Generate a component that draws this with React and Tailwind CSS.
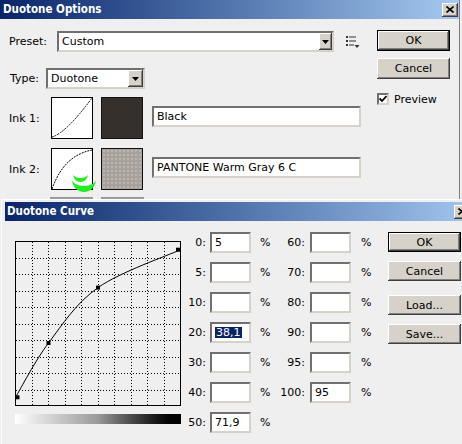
import React from 'react';

const sunken =
  'bg-white border-2 border-t-[#707070] border-l-[#707070] border-b-[#d6d2ca] border-r-[#d6d2ca]';
const raised =
  'bg-[#d6d2ca] shadow-[inset_-1px_-1px_0_#404040,inset_1px_1px_0_#ffffff,inset_-2px_-2px_0_#808080]';
const titleFont = "font-['DejaVu_Sans_Condensed','Liberation_Sans',sans-serif] font-bold text-[11.5px] text-white";

const DownArrow = () => (
  <svg width="7" height="4" viewBox="0 0 7 4">
    <path d="M0 0h7L3.5 4z" fill="#000" />
  </svg>
);

const CloseBtn = ({ className = '' }) => (
  <div className={`${raised} w-[16px] h-[14px] flex items-center justify-center ${className}`}>
    <svg width="8" height="7" viewBox="0 0 8 7">
      <path d="M0.5 0.5L7.5 6.5M7.5 0.5L0.5 6.5" stroke="#000" strokeWidth="1.6" />
    </svg>
  </div>
);

const Select = ({ value, className, btn }) => (
  <div className={`${sunken} h-[21px] flex items-stretch ${className}`}>
    <span className="flex-1 flex items-center pl-[3px]">{value}</span>
    <div className={`${raised} ${btn} flex items-center justify-center`}>
      <DownArrow />
    </div>
  </div>
);

const Button = ({ children, className = '' }) => (
  <div className={`${raised} w-[73px] flex items-center justify-center ${className}`}>{children}</div>
);

const MenuIcon = ({ className = '' }) => (
  <svg className={className} width="14" height="12" viewBox="0 0 14 12">
    <g fill="#333">
      <rect x="0" y="0" width="2" height="2" />
      <rect x="3" y="0.5" width="7" height="1" />
      <rect x="0" y="4" width="2" height="2" />
      <rect x="3" y="4.5" width="7" height="1" />
      <rect x="0" y="8" width="2" height="2" />
      <rect x="3" y="8.5" width="5" height="1" />
      <path d="M8.5 9h5l-2.5 3z" />
    </g>
  </svg>
);

const InkRow = ({ label, curve, swatch, value, className }) => (
  <div className={`h-[42px] flex items-start ${className}`}>
    <span className="w-[51px] pl-[9px] self-center">{label}</span>
    <div className="w-[42px] h-[42px] bg-white border border-black">
      <svg width="40" height="40" viewBox="0 0 40 40">
        <path d={curve} fill="none" stroke="#000" strokeWidth="1" strokeDasharray="2 1" />
      </svg>
    </div>
    <div className={`ml-[8px] w-[42px] h-[42px] border border-[#111] ${swatch}`} />
    <div className={`${sunken} ml-[9px] mt-[9px] w-[209px] h-[21px] flex items-center pl-[3px]`}>{value}</div>
  </div>
);

const pts = [
  [0.5, 156.3],
  [33.5, 102],
  [83, 46.6],
  [165.5, 8.7],
];

const curvePath = () => {
  let d = `M${pts[0][0]} ${pts[0][1]}`;
  for (let i = 0; i < pts.length - 1; i++) {
    const p0 = pts[i - 1] || pts[i];
    const p1 = pts[i];
    const p2 = pts[i + 1];
    const p3 = pts[i + 2] || p2;
    const c1 = [p1[0] + (p2[0] - p0[0]) / 6, p1[1] + (p2[1] - p0[1]) / 6];
    const c2 = [p2[0] - (p3[0] - p1[0]) / 6, p2[1] - (p3[1] - p1[1]) / 6];
    d += ` C${c1[0]} ${c1[1]} ${c2[0]} ${c2[1]} ${p2[0]} ${p2[1]}`;
  }
  return d;
};

const Graph = () => {
  const lines = [1, 2, 3, 4, 5, 6, 7, 8, 9].map((i) => Math.round(i * 16.5) + 0.5);
  return (
    <svg width="166" height="165" viewBox="0 0 166 165">
      {lines.map((v) => (
        <g key={v} stroke="#000" strokeWidth="1" strokeDasharray="1 2">
          <line x1={v} y1="1" x2={v} y2="164" />
          <line x1="1" y1={v} x2="165" y2={v} />
        </g>
      ))}
      <rect x="0.5" y="0.5" width="165" height="164" fill="none" stroke="#000" />
      <path d={curvePath()} fill="none" stroke="#000" strokeWidth="1" />
      {pts.map(([x, y]) => {
        const cx = Math.min(Math.max(x, 2.5), 163);
        return <rect key={x} x={cx - 2} y={y - 2} width="4" height="4" fill="#000" />;
      })}
    </svg>
  );
};

const Pct = ({ label, value, labelW, selected }) => (
  <>
    <span className={`${labelW} text-right`}>{label}</span>
    <div className={`${sunken} ml-[4px] w-[41px] h-[21px] flex items-center pl-[3px]`}>
      {selected ? <span className="bg-[#0a246a] text-white px-[1px]">{value}</span> : value}
    </div>
  </>
);

const rows = [
  ['0:', '5', '60:', ''],
  ['5:', '', '70:', ''],
  ['10:', '', '80:', ''],
  ['20:', '38,1', '90:', ''],
  ['30:', '', '95:', ''],
  ['40:', '', '100:', '95'],
  ['50:', '71,9', null, null],
];

export default function App() {
  return (
    <div className="relative w-[462px] h-[444px] overflow-hidden bg-[#efefef] text-[11px] leading-none text-black font-['DejaVu_Sans',sans-serif]">
      {/* Duotone Options window */}
      <div className="absolute left-0 top-0 w-[460px] h-[200px] border-r border-[#7f7f7f] bg-[#efefef]">
        <div className="h-[19px] bg-linear-to-r from-[#0a246a] to-[#a6caf0] flex items-center pl-[3px]">
          <span className={titleFont}>Duotone Options</span>
          <CloseBtn className="ml-auto mr-[1px]" />
        </div>
        <div className="flex">
          <div className="w-[377px] flex flex-col">
            <div className="mt-[12px] h-[21px] flex items-center">
              <span className="w-[57px] pl-[9px]">Preset:</span>
              <Select value="Custom" className="w-[277px]" btn="w-[13px]" />
              <MenuIcon className="ml-[12px]" />
            </div>
            <div className="mt-[16px] h-[21px] flex items-center">
              <span className="w-[46px] pl-[10px]">Type:</span>
              <Select value="Duotone" className="w-[99px]" btn="w-[15px]" />
            </div>
            <InkRow
              className="mt-[8px]"
              label="Ink 1:"
              curve="M0 39 Q14 35 40 0"
              swatch="bg-[#35302c]"
              value="Black"
            />
            <InkRow
              className="mt-[9px]"
              label="Ink 2:"
              curve="M0 40 C8 18 20 5 40 1"
              swatch="bg-[#a8a19b] bg-[radial-gradient(circle,#bbb5af_0.7px,transparent_1px)] bg-[length:4px_4px]"
              value="PANTONE Warm Gray 6 C"
            />
            <div className="mt-[7px] h-[3px] flex">
              <div className="ml-[50px] w-[43px] bg-[#9b9b9b]" />
              <div className="ml-[8px] w-[43px] bg-[#9b9b9b]" />
            </div>
          </div>
          <div className="w-[73px] flex flex-col">
            <Button className="mt-[11px] h-[21px] border border-black">OK</Button>
            <Button className="mt-[7px] h-[21px]">Cancel</Button>
            <div className="mt-[14px] flex items-center">
              <div className={`${sunken} w-[12px] h-[12px] flex items-center justify-center`}>
                <svg width="8" height="8" viewBox="0 0 8 8">
                  <path d="M0.5 3.5L3 6L7.5 1" fill="none" stroke="#000" strokeWidth="1.8" />
                </svg>
              </div>
              <span className="ml-[5px]">Preview</span>
            </div>
          </div>
        </div>
        {/* green cursor crescents over Ink 2 */}
        <svg className="absolute left-[71px] top-[172px]" width="28" height="24" viewBox="0 0 28 24">
          <path d="M2 2 A7.5 8 0 0 0 17 2 A7.5 4 0 0 1 2 2 Z" fill="#1ef01e" />
          <path d="M1 7 A12 13 0 0 0 25 7 A12 7 0 0 1 1 7 Z" fill="#1ef01e" />
        </svg>
      </div>

      {/* Duotone Curve window */}
      <div className="absolute left-[1px] top-[199px] w-[480px] h-[260px] border-l border-t border-white bg-[#efefef] pt-[2px] pl-[3px]">
        <div className="h-[19px] bg-linear-to-r from-[#0a246a] to-[#a6caf0] flex items-center pl-[2px]">
          <span className={titleFont}>Duotone Curve</span>
          <CloseBtn className="ml-auto mr-[11px]" />
        </div>
        <div className="mt-[11px] flex items-start">
          <div className="ml-[10px] pt-[9px] w-[166px] flex flex-col">
            <Graph />
            <div className="mt-[8px] h-[10px] bg-linear-to-r from-white via-[#9a9a9a] to-black" />
          </div>
          <div className="w-[191px] flex flex-col gap-[9px]">
            {rows.map(([l1, v1, l2, v2]) => (
              <div key={l1} className="h-[21px] flex items-center">
                <Pct label={l1} value={v1} labelW="w-[25px]" selected={v1 === '38,1'} />
                <span className="ml-[9px] w-[11px]">%</span>
                {l2 && (
                  <>
                    <span className="w-[34px] text-right">{l2}</span>
                    <div className={`${sunken} ml-[5px] w-[41px] h-[21px] flex items-center pl-[3px]`}>{v2}</div>
                    <span className="ml-[10px]">%</span>
                  </>
                )}
              </div>
            ))}
          </div>
          <div className="ml-[16px] flex flex-col">
            <Button className="h-[20px] border border-black">OK</Button>
            <Button className="mt-[9px] h-[20px]">Cancel</Button>
            <Button className="mt-[14px] h-[20px]">Load...</Button>
            <Button className="mt-[9px] h-[20px]">Save...</Button>
          </div>
        </div>
      </div>
    </div>
  );
}
